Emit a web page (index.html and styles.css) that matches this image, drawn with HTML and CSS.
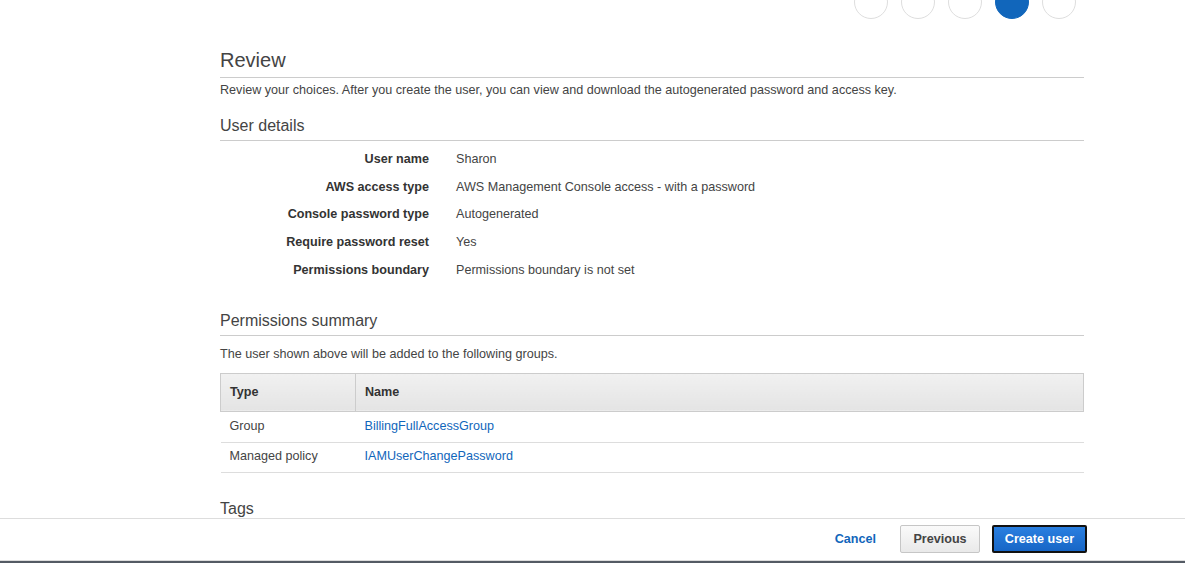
FILE: index.html
```html
<!DOCTYPE html>
<html>
<head>
<meta charset="utf-8">
<link rel="stylesheet" href="styles.css">
</head>
<body>
<div class="page">
  <div class="steps">
    <span class="step"></span>
    <span class="step"></span>
    <span class="step"></span>
    <span class="step active"></span>
    <span class="step"></span>
  </div>
  <h1 class="title">Review</h1>
  <p class="desc">Review your choices. After you create the user, you can view and download the autogenerated password and access key.</p>

  <h2 class="section first">User details</h2>
  <div class="details">
    <div class="row"><div class="label">User name</div><div class="value">Sharon</div></div>
    <div class="row"><div class="label">AWS access type</div><div class="value">AWS Management Console access - with a password</div></div>
    <div class="row"><div class="label">Console password type</div><div class="value">Autogenerated</div></div>
    <div class="row"><div class="label">Require password reset</div><div class="value">Yes</div></div>
    <div class="row"><div class="label">Permissions boundary</div><div class="value">Permissions boundary is not set</div></div>
  </div>

  <h2 class="section perm-title">Permissions summary</h2>
  <p class="desc small-gap">The user shown above will be added to the following groups.</p>
  <table class="perm">
    <thead>
      <tr><th class="c1">Type</th><th>Name</th></tr>
    </thead>
    <tbody>
      <tr><td class="c1">Group</td><td><a class="link" href="#">BillingFullAccessGroup</a></td></tr>
      <tr><td class="c1">Managed policy</td><td><a class="link" href="#">IAMUserChangePassword</a></td></tr>
    </tbody>
  </table>

  <h2 class="section tags">Tags</h2>
</div>

<div class="footer">
  <a class="cancel" href="#">Cancel</a>
  <button class="btn prev">Previous</button>
  <button class="btn primary">Create user</button>
</div>
</body>
</html>
```

FILE: styles.css
```css
* { box-sizing: border-box; }
html, body { margin: 0; padding: 0; background: #fff; }
body {
  font-family: "Liberation Sans", Arial, sans-serif;
  font-size: 12.6px;
  color: #444;
  overflow: hidden;
}
.page {
  width: 864px;
  margin-left: 220px;
}
.steps {
  display: flex;
  justify-content: flex-end;
  gap: 13px;
  padding-right: 8px;
  margin-top: -15px;
  height: 34px;
}
.step {
  width: 34px;
  height: 34px;
  border-radius: 50%;
  border: 1px solid #dedede;
  background: #fff;
}
.step.active {
  background: #1166bb;
  border-color: #1166bb;
}
.title {
  margin: 29px 0 0;
  font-size: 20px;
  line-height: 24px;
  font-weight: normal;
  color: #444;
  padding-bottom: 5px;
  border-bottom: 1px solid #ccc;
}
.desc {
  margin: 4px 0 0;
  line-height: 16px;
  color: #444;
}
.desc.small-gap { margin-top: 10px; }
.section {
  margin: 26px 0 0;
  font-size: 16px;
  line-height: 20px;
  font-weight: normal;
  color: #444;
  padding-bottom: 4px;
  border-bottom: 1px solid #ccc;
}
.section.first { margin-top: 18px; }
.section.perm-title { margin-top: 27px; }
.section.tags { margin-top: 26px; border-bottom: none; }
.details {
  margin-top: 4px;
}
.row {
  display: flex;
  height: 27.8px;
  align-items: center;
}
.label {
  width: 209px;
  text-align: right;
  font-weight: bold;
  color: #333;
}
.value {
  margin-left: 27px;
  color: #444;
}
.perm {
  margin-top: 11px;
  width: 864px;
  border-collapse: collapse;
}
.perm th {
  height: 38px;
  text-align: left;
  font-weight: bold;
  color: #333;
  padding: 0 9px;
  background: linear-gradient(#f1f1f1, #e4e4e4);
  border: 1px solid #ccc;
}
.perm td {
  height: 30.6px;
  padding: 0 9px 2px;
  border-bottom: 1px solid #ddd;
  color: #444;
}
.perm .c1 { width: 135px; }
.link {
  color: #1166bb;
  text-decoration: none;
}
.footer {
  position: fixed;
  left: 0;
  right: 0;
  bottom: 0;
  height: 45px;
  background: #fff;
  border-top: 1px solid #ddd;
  border-bottom: 2px solid #545b64;
  box-shadow: inset 0 -1px 0 #ddd;
  display: flex;
  align-items: center;
  justify-content: flex-end;
  padding: 0 98px 2px 0;
}
.cancel {
  color: #1166bb;
  font-weight: bold;
  text-decoration: none;
  margin-right: 24px;
}
.btn {
  font-family: "Liberation Sans", Arial, sans-serif;
  font-size: 12.6px;
  font-weight: bold;
  height: 28px;
  border-radius: 2px;
  padding: 0;
  cursor: pointer;
}
.prev {
  width: 80px;
  color: #444;
  background: linear-gradient(#fafafa, #e9e9e9);
  border: 1px solid #c6c6c6;
}
.primary {
  width: 95px;
  margin-left: 12px;
  color: #fff;
  background: linear-gradient(#2a7fe0, #1766c6);
  border: 2px solid #111;
}
```
